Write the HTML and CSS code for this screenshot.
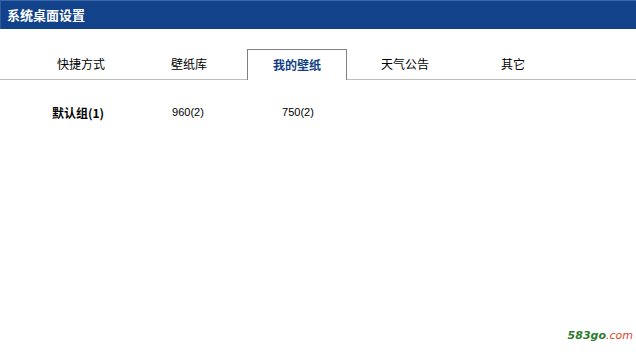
FILE: index.html
```html
<!DOCTYPE html>
<html lang="zh">
<head>
<meta charset="utf-8">
<link rel="stylesheet" href="styles.css">
</head>
<body>
<div class="header">系统桌面设置</div>
<div class="tabs">
  <div class="tab">快捷方式</div>
  <div class="tab">壁纸库</div>
  <div class="tab active">我的壁纸</div>
  <div class="tab">天气公告</div>
  <div class="tab">其它</div>
</div>
<div class="groups">
  <div class="group bold">默认组(1)</div>
  <div class="group">960(2)</div>
  <div class="group">750(2)</div>
</div>
<div class="footer">
  <span class="wm"><span class="wm-num">583go</span><span class="wm-com">.com</span></span>
</div>
</body>
</html>
```
FILE: styles.css
```css
html, body {
  margin: 0;
  padding: 0;
  background: #ffffff;
  width: 636px;
  height: 352px;
  overflow: hidden;
  font-family: "Noto Sans CJK SC", "Liberation Sans", sans-serif;
  font-size: 12px;
  color: #000;
}
.header {
  height: 28px;
  line-height: 28px;
  background: #11428a;
  border-top: 1px solid #3a68ad;
  border-left: 1px solid #2f5c9f;
  color: #ffffff;
  font-weight: bold;
  font-size: 13px;
  padding-left: 6px;
}
.tabs {
  display: flex;
  gap: 8px;
  padding-left: 31px;
  margin-top: 20px;
  height: 30px;
  border-bottom: 1px solid #bdbdbd;
}
.tab {
  width: 100px;
  box-sizing: border-box;
  text-align: center;
  line-height: 30px;
  height: 30px;
}
.tab.active {
  height: 31px;
  border: 1px solid #808080;
  border-bottom: none;
  background: #fff;
  color: #113f85;
  font-weight: bold;
  line-height: 29px;
}
.groups {
  display: flex;
  gap: 10px;
  padding-left: 28px;
  margin-top: 22px;
  height: 20px;
  align-items: center;
}
.group {
  width: 100px;
  text-align: center;
  font-family: "Liberation Sans", "Noto Sans CJK SC", sans-serif;
  font-size: 11px;
}
.group.bold {
  font-family: "Noto Sans CJK SC", sans-serif;
  font-size: 12px;
  font-weight: bold;
}
.footer {
  display: flex;
  justify-content: flex-end;
  padding-right: 3px;
  margin-top: 207px;
}
.wm {
  font-family: "DejaVu Sans", sans-serif;
  font-size: 11px;
  line-height: 14px;
  font-weight: bold;
  font-style: italic;
}
.wm-num { color: #2b7a2b; }
.wm-com { color: #e2452a; font-weight: normal; }
```
